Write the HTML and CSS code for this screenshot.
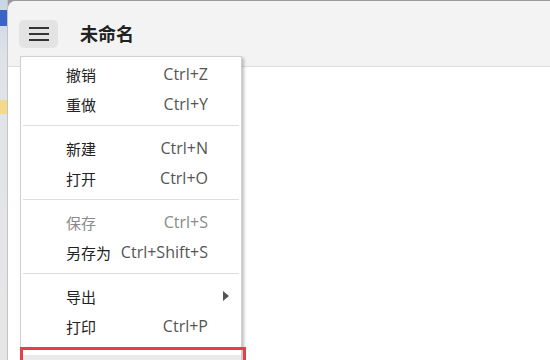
FILE: index.html
```html
<!DOCTYPE html>
<html lang="zh-CN">

<head>
  <meta charset="UTF-8">
  <title>未命名</title>
  <link rel="stylesheet" href="styles.css">
</head>

<body>
  <div class="desktop">
    <div class="desk-icon"></div>
    <div class="desk-note"></div>
  </div>

  <div class="window">
    <header class="topbar">
      <button class="menu-btn" aria-label="菜单">
        <svg width="20" height="14" viewBox="0 0 20 14">
          <rect x="0" y="0" width="20" height="2" fill="#333"/>
          <rect x="0" y="6" width="20" height="2" fill="#333"/>
          <rect x="0" y="12" width="20" height="2" fill="#333"/>
        </svg>
      </button>
      <h1 class="doc-title">未命名</h1>
    </header>
    <main class="canvas"></main>
  </div>

  <!-- File menu dropdown -->
  <ul class="menu">
    <li class="item"><span class="label">撤销</span><span class="key">Ctrl+Z</span><span class="sub"></span></li>
    <li class="item"><span class="label">重做</span><span class="key">Ctrl+Y</span><span class="sub"></span></li>
    <li class="sep"></li>
    <li class="item"><span class="label">新建</span><span class="key">Ctrl+N</span><span class="sub"></span></li>
    <li class="item"><span class="label">打开</span><span class="key">Ctrl+O</span><span class="sub"></span></li>
    <li class="sep"></li>
    <li class="item disabled"><span class="label">保存</span><span class="key">Ctrl+S</span><span class="sub"></span></li>
    <li class="item"><span class="label">另存为</span><span class="key">Ctrl+Shift+S</span><span class="sub"></span></li>
    <li class="sep"></li>
    <li class="item"><span class="label">导出</span><span class="key"></span><span class="sub"><i class="arrow"></i></span></li>
    <li class="item"><span class="label">打印</span><span class="key">Ctrl+P</span><span class="sub"></span></li>
    <li class="sep"></li>
    <li class="item hover"></li>
  </ul>

  <div class="highlight"></div>
</body>

</html>
```

FILE: styles.css
```css
body {
  margin: 0;
  height: 360px;
  overflow: hidden;
  display: flex;
  background-color: #9a9a9a;
  font-family: "Open Sans", "Noto Sans CJK SC", sans-serif;
  font-size: 15px;
  color: #222;
}

.desktop {
  width: 7px;
  flex: none;
  background: linear-gradient(#c9d6e4 0, #dfe3e8 60px, #e6e6e6 100%);
  border-right: 1px solid #c4c4c4;
  display: flex;
  flex-direction: column;
  padding-top: 10px;
  gap: 74px;
}

.desk-icon {
  height: 16px;
  background-color: #3a64c8;
}

.desk-note {
  height: 14px;
  background-color: #f3d98a;
}

.window {
  flex: 1;
  margin-top: 1px;
  border-top-left-radius: 8px;
  background-color: #fff;
  display: flex;
  flex-direction: column;
  overflow: hidden;
}

.topbar {
  height: 66px;
  box-sizing: border-box;
  background-color: #f3f3f3;
  border-bottom: 1px solid #dcdcdc;
  display: flex;
  align-items: center;
  padding: 0 0 0 11px;
  gap: 22px;
}

.menu-btn {
  width: 39px;
  height: 28px;
  border: none;
  border-radius: 5px;
  background-color: #e3e3e3;
  display: flex;
  align-items: center;
  justify-content: center;
  padding: 0;
}

.doc-title {
  margin: 0 0 2px;
  font-size: 18px;
  font-weight: bold;
  color: #222;
}

.canvas {
  flex: 1;
}

.menu {
  position: absolute;
  left: 20px;
  top: 56px;
  width: 222px;
  height: 310px;
  overflow: hidden;
  box-sizing: border-box;
  margin: 0;
  padding: 2px 0 0;
  list-style: none;
  background-color: #fff;
  border: 1px solid #d0d0d0;
  box-shadow: 2px 2px 3px rgba(0, 0, 0, 0.25);
}

.item {
  height: 30px;
  display: flex;
  align-items: center;
  padding-left: 45px;
}

.item .label {
  flex: 1;
  color: #222;
}

.item .key {
  font-size: 16px;
  color: #555;
}

.item .sub {
  width: 31px;
  display: flex;
  justify-content: center;
  padding-left: 2px;
}

.item.disabled .label,
.item.disabled .key {
  color: #8a8a8a;
}

.item.hover {
  background-color: #eaeaea;
}

.arrow {
  width: 0;
  height: 0;
  border-top: 5px solid transparent;
  border-bottom: 5px solid transparent;
  border-left: 6px solid #555;
}

.sep {
  height: 1px;
  margin: 6px 2px 7px;
  background-color: #dedede;
}

.highlight {
  position: absolute;
  left: 20px;
  top: 347px;
  width: 226px;
  height: 13px;
  box-sizing: border-box;
  border: 3px solid #e5404a;
  border-bottom: none;
}
```
